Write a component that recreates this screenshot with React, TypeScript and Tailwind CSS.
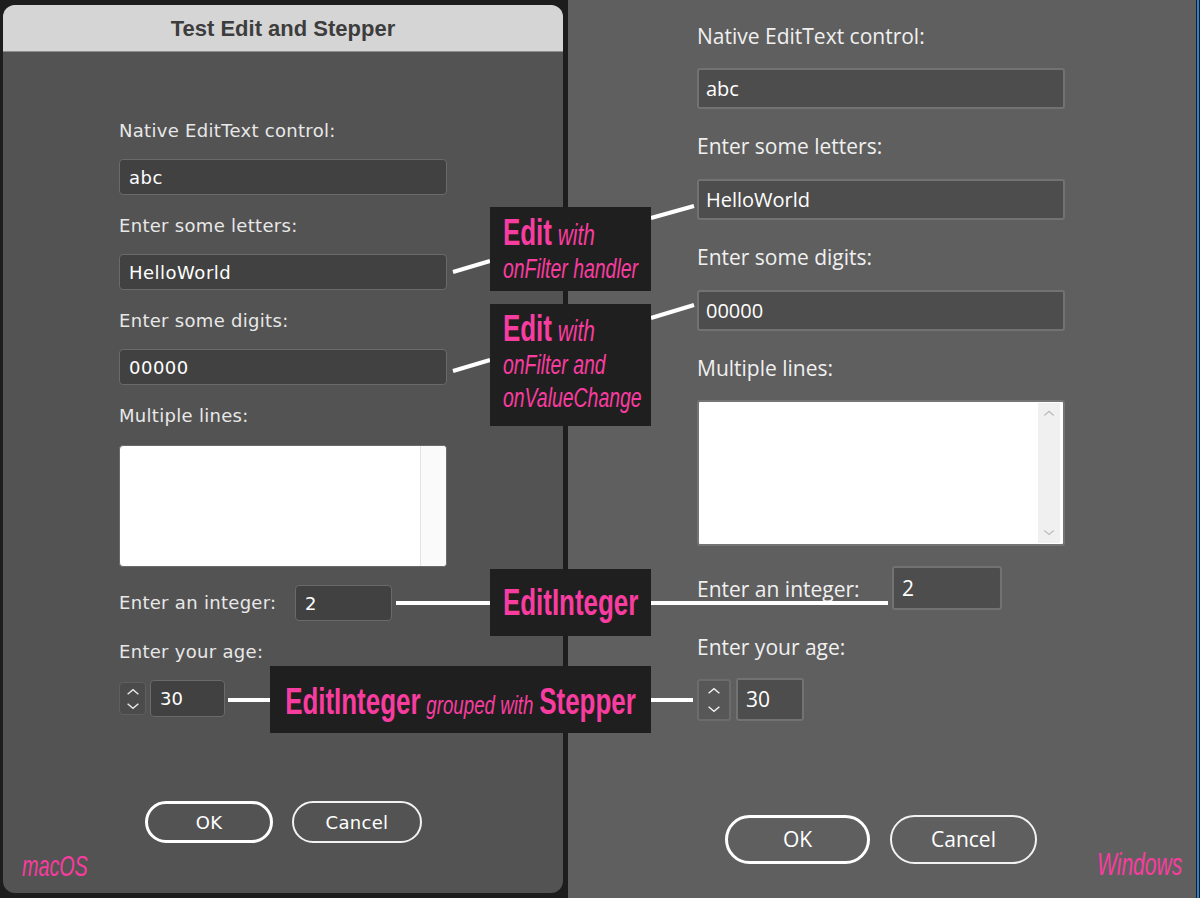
import React from "react";

const PINK = "text-[#f93c9f]";
const ANNO = "font-['Liberation_Sans',Arial,sans-serif]";

function UpDown({ size, color }: { size: number; color: string }) {
    return (
        <svg width={size} height={size * 0.55} viewBox="0 0 20 11" fill="none">
            <path d="M4 8 L10 3 L16 8" stroke={color} strokeWidth="1.6" />
        </svg>
    );
}

function UpDownFlip({ size, color }: { size: number; color: string }) {
    return (
        <svg width={size} height={size * 0.55} viewBox="0 0 20 11" fill="none">
            <path d="M4 3 L10 8 L16 3" stroke={color} strokeWidth="1.6" />
        </svg>
    );
}

// ---- macOS side ----
function MacLabel({ children }: { children: React.ReactNode }) {
    return <div className="text-[18px] leading-[22px] tracking-[0.3px] text-[#e8e8e8]">{children}</div>;
}

function MacField({ value, className = "" }: { value: string; className?: string }) {
    return (
        <div
            className={`flex h-[36px] w-[328px] items-center rounded-[4px] border-[1.5px] border-[#6a6a6a] bg-[#414141] pl-[9px] text-[18px] tracking-[0.5px] text-white ${className}`}
        >
            {value}
        </div>
    );
}

function MacDialog() {
    return (
        <div className="ml-[3px] mt-[5px] flex h-[888px] w-[560px] shrink-0 flex-col overflow-hidden rounded-[12px] bg-[#535353] font-['DejaVu_Sans',sans-serif]">
            <div className="flex h-[47px] shrink-0 items-center justify-center border-b border-[#8e8e8e] bg-[#d5d5d5] pt-[1px] font-['Liberation_Sans',Arial,sans-serif] text-[22px] font-bold text-[#3d3d3d]">
                Test Edit and Stepper
            </div>
            <div className="flex flex-col pl-[116px] pt-[68px]">
                <MacLabel>Native EditText control:</MacLabel>
                <MacField value="abc" className="mt-[17px]" />
                <div className="mt-[20px]"><MacLabel>Enter some letters:</MacLabel></div>
                <MacField value="HelloWorld" className="mt-[17px]" />
                <div className="mt-[20px]"><MacLabel>Enter some digits:</MacLabel></div>
                <MacField value="00000" className="mt-[17px]" />
                <div className="mt-[20px]"><MacLabel>Multiple lines:</MacLabel></div>
                <div className="mt-[18px] flex h-[122px] w-[328px] overflow-hidden rounded-[4px] border-[1.5px] border-[#6a6a6a] bg-white">
                    <div className="flex-1" />
                    <div className="w-[26px] border-l border-[#e2e2e2] bg-[#fafafa]" />
                </div>
                <div className="mt-[18px] flex items-center">
                    <div className="w-[176px]"><MacLabel>Enter an integer:</MacLabel></div>
                    <div className="flex h-[36px] w-[97px] items-center rounded-[4px] border-[1.5px] border-[#6a6a6a] bg-[#414141] pl-[9px] text-[18px] text-white">
                        2
                    </div>
                </div>
                <div className="mt-[20px]"><MacLabel>Enter your age:</MacLabel></div>
                <div className="mt-[17px] flex items-center gap-[4px]">
                    <div className="flex h-[33px] w-[27px] flex-col items-center justify-center gap-[4px] rounded-[4px] border border-[#5f5f5f] bg-[#4b4b4b]">
                        <UpDown size={18} color="#e8e8e8" />
                        <UpDownFlip size={18} color="#e8e8e8" />
                    </div>
                    <div className="flex h-[37px] w-[75px] items-center rounded-[4px] border-[1.5px] border-[#6a6a6a] bg-[#414141] pl-[9px] text-[18px] text-white">
                        30
                    </div>
                </div>
            </div>
            <div className="mt-[84px] flex shrink-0 gap-[19px] pl-[142px]">
                <div className="flex h-[42px] w-[128px] shrink-0 items-center justify-center rounded-full border-[3px] border-white text-[18px] tracking-[0.3px] text-white">
                    OK
                </div>
                <div className="flex h-[42px] w-[130px] shrink-0 items-center justify-center rounded-full border-2 border-[#f2f2f2] text-[18px] tracking-[0.3px] text-white">
                    Cancel
                </div>
            </div>
            <div className="ml-[19px] mt-[6px] h-[34px]">
                <span className={`inline-block origin-left scale-x-[0.68] whitespace-nowrap ${ANNO} text-[29px] italic leading-[34px] ${PINK}`}>
                    macOS
                </span>
            </div>
        </div>
    );
}

// ---- Windows side ----
function WinLabel({ children }: { children: React.ReactNode }) {
    return <div className="whitespace-nowrap text-[21px] leading-[24px] text-[#f0f0f0]">{children}</div>;
}

function WinField({ value, className = "" }: { value: string; className?: string }) {
    return (
        <div
            className={`flex h-[41px] w-[368px] items-center rounded-[3px] border-2 border-[#727272] bg-[#4d4d4d] pl-[7px] text-[20px] text-white ${className}`}
        >
            {value}
        </div>
    );
}

function WinDialog() {
    return (
        <div className="ml-[5px] flex h-[898px] w-[628px] shrink-0 flex-col bg-[#5f5f5f] font-['Open_Sans',sans-serif]">
            <div className="flex flex-col pl-[129px] pt-[24px]">
                <WinLabel>Native EditText control:</WinLabel>
                <WinField value="abc" className="mt-[20px]" />
                <div className="mt-[25px]"><WinLabel>Enter some letters:</WinLabel></div>
                <WinField value="HelloWorld" className="mt-[21px]" />
                <div className="mt-[25px]"><WinLabel>Enter some digits:</WinLabel></div>
                <WinField value="00000" className="mt-[21px]" />
                <div className="mt-[25px]"><WinLabel>Multiple lines:</WinLabel></div>
                <div className="mt-[20px] flex h-[146px] w-[368px] overflow-hidden rounded-[3px] border-2 border-[#747474] bg-white">
                    <div className="flex-1" />
                    <div className="my-[1px] mr-[3px] flex w-[22px] flex-col items-center justify-between bg-[#f0f0f0] py-[6px]">
                        <UpDown size={16} color="#bdbdbd" />
                        <UpDownFlip size={16} color="#bdbdbd" />
                    </div>
                </div>
                <div className="mt-[20px] flex items-center">
                    <div className="w-[195px] pt-[2px]"><WinLabel>Enter an integer:</WinLabel></div>
                    <div className="flex h-[44px] w-[110px] items-start rounded-[3px] border-2 border-[#727272] bg-[#4d4d4d] pl-[8px] pt-[5px] text-[21px] text-white">
                        2
                    </div>
                </div>
                <div className="mt-[25px]"><WinLabel>Enter your age:</WinLabel></div>
                <div className="mt-[19px] flex items-center gap-[5px]">
                    <div className="flex h-[42px] w-[34px] flex-col items-center justify-center gap-[8px] rounded-[3px] border-2 border-[#6c6c6c] bg-[#575757]">
                        <UpDown size={18} color="#f2f2f2" />
                        <UpDownFlip size={18} color="#f2f2f2" />
                    </div>
                    <div className="flex h-[43px] w-[68px] items-center rounded-[3px] border-2 border-[#727272] bg-[#4d4d4d] pl-[8px] text-[21px] text-white">
                        30
                    </div>
                </div>
            </div>
            <div className="mt-[94px] flex items-start pl-[157px]">
                <div className="flex h-[49px] w-[145px] shrink-0 items-center justify-center rounded-full border-[3px] border-white text-[21px] text-white">
                    OK
                </div>
                <div className="ml-[20px] flex h-[49px] w-[147px] shrink-0 items-center justify-center rounded-full border-2 border-[#f2f2f2] text-[21px] text-white">
                    Cancel
                </div>
                <div className="ml-[60px] mt-[32px] w-[83px] shrink-0">
                    <span className={`inline-block origin-left scale-x-[0.68] whitespace-nowrap ${ANNO} text-[31px] italic leading-[36px] ${PINK}`}>
                        Windows
                    </span>
                </div>
            </div>
        </div>
    );
}

// ---- annotation overlay ----
function Connectors() {
    const lines: [number, number, number, number][] = [
        [453, 272, 490, 261],
        [651, 218, 694, 206],
        [453, 371, 490, 360],
        [651, 318, 694, 305],
        [396, 603, 490, 603],
        [651, 603, 888, 603],
        [228, 700, 270, 700],
        [651, 700, 693, 700],
    ];
    return (
        <svg className="pointer-events-none absolute left-0 top-0" width={1200} height={898}>
            {lines.map(([x1, y1, x2, y2], i) => (
                <line key={i} x1={x1} y1={y1} x2={x2} y2={y2} stroke="#ffffff" strokeWidth={4} />
            ))}
        </svg>
    );
}

const bold = "font-bold text-[36px] not-italic";
const ital = "italic font-normal";

export default function App() {
    return (
        <div className="relative flex h-[898px] w-[1200px] overflow-hidden bg-[#1d1d1d]">
            <MacDialog />
            <WinDialog />
            <div className="w-[1px] shrink-0 bg-[#1d1d1d]" />
            <div className="w-[2px] shrink-0 bg-[#2a7fd6]" />

            <Connectors />

            <div className={`absolute left-[490px] top-[207px] h-[84px] w-[161px] overflow-hidden bg-[#1f1f1f] ${ANNO} ${PINK}`}>
                <div className="w-[224px] origin-top-left scale-x-[0.72] whitespace-nowrap pl-[18px] pt-[9px]">
                    <div className="text-[36px] leading-[34px]">
                        <span className={bold}>Edit</span>
                        <span className={`${ital} text-[29px]`}> with</span>
                    </div>
                    <div className={`${ital} text-[27px] leading-[35px]`}>onFilter handler</div>
                </div>
            </div>

            <div className={`absolute left-[490px] top-[304px] h-[122px] w-[161px] overflow-hidden bg-[#1f1f1f] ${ANNO} ${PINK}`}>
                <div className="w-[224px] origin-top-left scale-x-[0.72] whitespace-nowrap pl-[18px] pt-[7px]">
                    <div className="text-[36px] leading-[36px]">
                        <span className={bold}>Edit</span>
                        <span className={`${ital} text-[29px]`}> with</span>
                    </div>
                    <div className={`${ital} text-[27px] leading-[33px]`}>onFilter and</div>
                    <div className={`${ital} text-[27px] leading-[33px]`}>onValueChange</div>
                </div>
            </div>

            <div className={`absolute left-[490px] top-[569px] h-[67px] w-[161px] overflow-hidden bg-[#1f1f1f] ${ANNO} ${PINK}`}>
                <div className="flex h-full w-[224px] origin-top-left scale-x-[0.72] items-center justify-center whitespace-nowrap">
                    <span className={bold}>EditInteger</span>
                </div>
            </div>

            <div className={`absolute left-[270px] top-[666px] h-[67px] w-[381px] overflow-hidden bg-[#1f1f1f] ${ANNO} ${PINK}`}>
                <div className="flex h-full w-[529px] origin-top-left scale-x-[0.72] items-baseline justify-center whitespace-nowrap pt-[9px]">
                    <span className={bold}>EditInteger</span>
                    <span className={`${ital} mx-[8px] text-[26px]`}>grouped with</span>
                    <span className={bold}>Stepper</span>
                </div>
            </div>
        </div>
    );
}
